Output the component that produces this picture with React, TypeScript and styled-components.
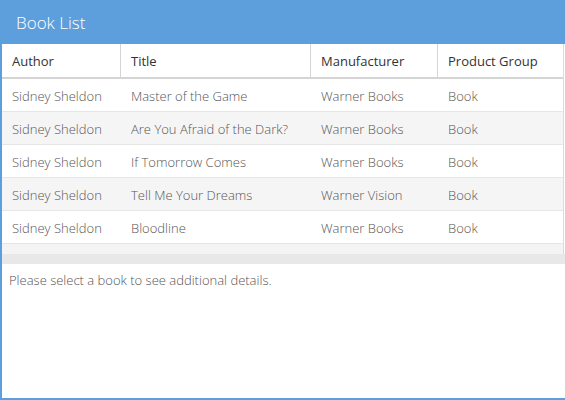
import React from "react";
import styled, { createGlobalStyle } from "styled-components";

const Global = createGlobalStyle`
  html, body { margin: 0; padding: 0; background: #fff; }
  body { font-family: "Open Sans", "Liberation Sans", sans-serif; width: 565px; height: 400px; overflow: hidden; }
`;

const Panel = styled.div`
  box-sizing: border-box;
  width: 580px;
  height: 400px;
  border-left: 2px solid #5d9fdc;
  border-bottom: 2px solid #5d9fdc;
  display: flex;
  flex-direction: column;
`;

const Header = styled.div`
  height: 44px;
  background: #5d9fdc;
  margin-left: -2px;
  padding-left: 16px;
  display: flex;
  align-items: center;
  color: #fff;
  font-size: 17px;
  font-weight: 300;
`;

const Grid = styled.div`
  width: 562px;
  border-right: 1px solid #dcdcdc;
  box-sizing: border-box;
  background: #f4f4f4;
`;

const cols = "119px 190px 127px 1fr";

const HeadRow = styled.div`
  display: grid;
  grid-template-columns: ${cols};
  height: 33px;
  border-bottom: 2px solid #d4d4d4;
  background: #fff;
`;

const HeadCell = styled.div<{ $last?: boolean }>`
  display: flex;
  align-items: center;
  padding-left: 10px;
  font-size: 13px;
  color: #333;
  border-right: ${(p) => (p.$last ? "none" : "1px solid #d4d4d4")};
`;

const Row = styled.div<{ $alt: boolean }>`
  display: grid;
  grid-template-columns: ${cols};
  height: 32px;
  border-bottom: 1px solid #e6e6e6;
  background: ${(p) => (p.$alt ? "#f5f5f5" : "#fff")};
`;

const Cell = styled.div`
  display: flex;
  align-items: center;
  padding: 2px 0 0 10px;
  font-size: 13px;
  font-weight: 300;
  color: #555;
  white-space: nowrap;
`;

const Filler = styled.div`
  height: 10px;
`;

const ScrollBar = styled.div`
  height: 10px;
  background: #e8e8e8;
  width: 565px;
`;

const Note = styled.div`
  padding: 7px 0 0 7px;
  font-size: 13px;
  font-weight: 300;
  color: #555;
`;

const books = [
  ["Sidney Sheldon", "Master of the Game", "Warner Books", "Book"],
  ["Sidney Sheldon", "Are You Afraid of the Dark?", "Warner Books", "Book"],
  ["Sidney Sheldon", "If Tomorrow Comes", "Warner Books", "Book"],
  ["Sidney Sheldon", "Tell Me Your Dreams", "Warner Vision", "Book"],
  ["Sidney Sheldon", "Bloodline", "Warner Books", "Book"],
];

const headers = ["Author", "Title", "Manufacturer", "Product Group"];

export default function App() {
  return (
    <>
      <Global />
      <Panel>
        <Header>Book List</Header>
        <Grid>
          <HeadRow>
            {headers.map((h, i) => (
              <HeadCell key={h} $last={i === headers.length - 1}>
                {h}
              </HeadCell>
            ))}
          </HeadRow>
          {books.map((b, i) => (
            <Row key={i} $alt={i % 2 === 1}>
              {b.map((c, j) => (
                <Cell key={j}>{c}</Cell>
              ))}
            </Row>
          ))}
          <Filler />
        </Grid>
        <ScrollBar />
        <Note>Please select a book to see additional details.</Note>
      </Panel>
    </>
  );
}
